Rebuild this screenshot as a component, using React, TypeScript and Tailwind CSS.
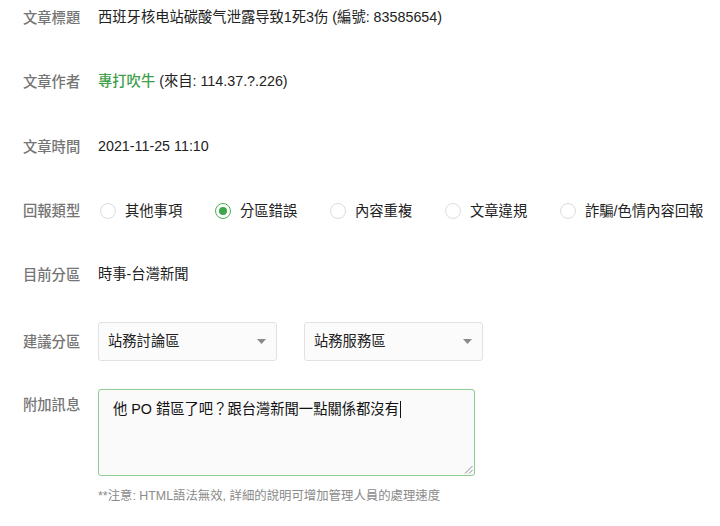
import React from "react";

const font = { fontFamily: '"Liberation Sans", "Noto Sans CJK TC", sans-serif' };

function Label({ children }: { children: React.ReactNode }) {
  return <div className="w-[75px] shrink-0 text-[14.3px] leading-5 font-medium text-[#757575]">{children}</div>;
}

function Radio({ label, checked, last }: { label: string; checked?: boolean; last?: boolean }) {
  return (
    <div className={last ? "flex items-center shrink-0" : "flex items-center w-[115px] shrink-0"}>
      <span
        className={
          checked
            ? "w-4 h-4 shrink-0 rounded-full border-[1.5px] border-[#4caf50] bg-white flex items-center justify-center"
            : "w-4 h-4 shrink-0 rounded-full border border-[#dcdcdc] bg-white"
        }
      >
        {checked && <span className="w-[8px] h-[8px] rounded-full bg-[#3da64a]" />}
      </span>
      <span className="ml-[9px] text-[14.3px] leading-5 text-[#222] whitespace-nowrap">{label}</span>
    </div>
  );
}

function Select({ value }: { value: string }) {
  return (
    <div className="w-[179px] h-[39px] rounded-[3px] border border-[#e2e2e2] bg-[#fbfbfb] flex items-center justify-between pl-[9px] pr-[10px]">
      <span className="text-[14.3px] text-[#222]">{value}</span>
      <svg width="9" height="5" viewBox="0 0 9 5">
        <path d="M0 0 L9 0 L4.5 5 Z" fill="#8a8a8a" />
      </svg>
    </div>
  );
}

export default function App() {
  return (
    <div className="w-[720px] h-[526px] bg-white pl-[23px] pt-[8px] overflow-hidden" style={font}>
      <div className="flex items-center h-5">
        <Label>文章標題</Label>
        <div className="text-[14.3px] text-[#222] whitespace-nowrap">西班牙核电站碳酸气泄露导致1死3伤 (編號: 83585654)</div>
      </div>
      <div className="flex items-center h-5 mt-[44px]">
        <Label>文章作者</Label>
        <div className="text-[14.3px] text-[#222] whitespace-nowrap">
          <span className="text-[#3f9f4b] font-medium">專打吹牛</span> (來自: 114.37.?.226)
        </div>
      </div>
      <div className="flex items-center h-5 mt-[45px]">
        <Label>文章時間</Label>
        <div className="text-[14.3px] text-[#222]">2021-11-25 11:10</div>
      </div>
      <div className="flex items-center h-5 mt-[44px]">
        <Label>回報類型</Label>
        <div className="flex items-center pl-[2px]">
          <Radio label="其他事項" />
          <Radio label="分區錯誤" checked />
          <Radio label="內容重複" />
          <Radio label="文章違規" />
          <Radio label="詐騙/色情內容回報" last />
        </div>
      </div>
      <div className="flex items-center h-5 mt-[44px]">
        <Label>目前分區</Label>
        <div className="text-[14.3px] text-[#222]">時事-台灣新聞</div>
      </div>
      <div className="flex items-center mt-[37px]">
        <Label>建議分區</Label>
        <div className="flex gap-[27px]">
          <Select value="站務討論區" />
          <Select value="站務服務區" />
        </div>
      </div>
      <div className="flex items-start mt-[28px]">
        <div className="pt-[6px]">
          <Label>附加訊息</Label>
        </div>
        <div className="relative w-[377px] h-[87px] rounded-[3px] border border-[#8fcb93] bg-[#fafafa] pl-[14px] pt-[8px]">
          <div className="text-[14.3px] leading-[22px] text-[#111] whitespace-nowrap flex items-center">
            他 PO 錯區了吧？跟台灣新聞一點關係都沒有
            <span className="inline-block w-px h-[17px] bg-[#111] ml-px" />
          </div>
          <svg className="absolute right-[1px] bottom-[1px]" width="9" height="9" viewBox="0 0 9 9">
            <path d="M8.5 1 L1 8.5 M8.5 5 L5 8.5" stroke="#8a8a8a" strokeWidth="1" />
          </svg>
        </div>
      </div>
      <div className="mt-[12px] ml-[75px] text-[12.4px] leading-4 text-[#8a8a8a] whitespace-nowrap">
        **注意: HTML語法無效, 詳細的說明可增加管理人員的處理速度
      </div>
    </div>
  );
}
